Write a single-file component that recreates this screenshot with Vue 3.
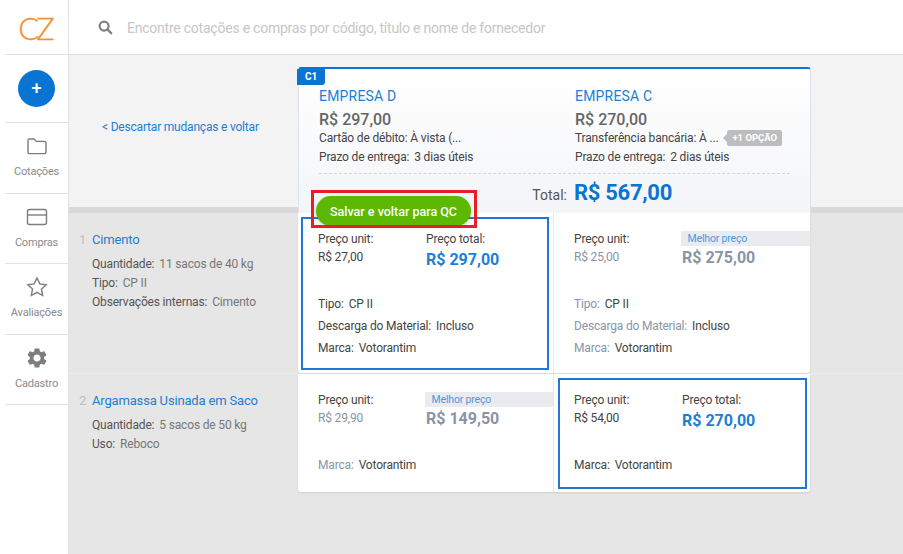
<template>
  <div class="app">
    <aside class="sidebar">
      <div class="logo">CZ</div>
      <div class="add-slot"><button class="add-btn">+</button></div>
      <a v-for="item in navItems" :key="item.label" class="nav-item">
        <svg class="nav-icon" viewBox="0 0 24 24" v-html="item.icon"></svg>
        <span>{{ item.label }}</span>
      </a>
    </aside>

    <div class="main">
      <header class="topbar">
        <svg class="search-icon" viewBox="0 0 16 16">
          <circle cx="6.500" cy="6.500" r="4.800" />
          <path d="M10 10l4.800 4.800" />
        </svg>
        <span class="search-text">Encontre cotações e compras por código, título e nome de fornecedor</span>
      </header>

      <section class="summary">
        <div class="back-col"><a class="back-link">&lt; Descartar mudanças e voltar</a></div>
        <div class="summary-card">
          <span class="tag">C1</span>
          <div class="vendors">
            <div v-for="vendor in vendors" :key="vendor.name" class="vendor">
              <div class="vendor-name">{{ vendor.name }}</div>
              <div class="vendor-price">{{ vendor.price }}</div>
              <div class="vendor-line">
                <span>{{ vendor.payment }}</span>
                <span v-if="vendor.extra" class="extra">{{ vendor.extra }}</span>
              </div>
              <div class="vendor-line">
                <span class="key">Prazo de entrega:</span><span>{{ vendor.delivery }}</span>
              </div>
            </div>
          </div>
          <div class="total-row">
            <span class="total-label">Total:</span>
            <span class="total-value">R$ 567,00</span>
          </div>
          <button class="save-btn">Salvar e voltar para QC</button>
          <div class="highlight"></div>
        </div>
      </section>

      <section v-for="(row, i) in rows" :key="row.name" class="row" :class="'row-' + (i + 1)">
        <div class="product">
          <div class="product-title">
            <span class="product-num">{{ i + 1 }}</span>
            <a class="product-name">{{ row.name }}</a>
          </div>
          <div class="product-attrs">
            <div v-for="attr in row.attrs" :key="attr[0]">
              <span class="attr-key">{{ attr[0] }}:</span><span class="attr-val">{{ attr[1] }}</span>
            </div>
          </div>
        </div>
        <div class="cells">
          <div v-for="cell in row.cells" :key="cell.total" class="cell" :class="{ selected: cell.selected }">
            <div class="prices">
              <div>
                <div class="price-label">Preço unit:</div>
                <div class="unit-price">{{ cell.unit }}</div>
              </div>
              <div>
                <div v-if="cell.selected" class="price-label">Preço total:</div>
                <div v-else class="best">Melhor preço</div>
                <div class="total-price">{{ cell.total }}</div>
              </div>
            </div>
            <div class="specs">
              <div v-for="spec in cell.specs" :key="spec[0]" class="spec">
                <span class="spec-key">{{ spec[0] }}:</span><span>{{ spec[1] }}</span>
              </div>
            </div>
          </div>
        </div>
      </section>
    </div>
  </div>
</template>

<script setup>
const navItems = [
  {
    label: 'Cotações',
    icon: '<path d="M3 6.500C3 5.400 3.600 5 4.500 5h4.600l2.200 2.400h8.200c1 0 1.500.6 1.500 1.500v9.200c0 1-.6 1.500-1.500 1.500h-15C3.600 19.600 3 19 3 18.100z" />'
  },
  {
    label: 'Compras',
    icon: '<rect x="2.500" y="4.500" width="19" height="15" rx="2" /><path d="M2.500 10h19" />'
  },
  {
    label: 'Avaliações',
    icon: '<path d="M12 3l2.800 5.900 6.400.8-4.700 4.400 1.200 6.400L12 17.400 6.300 20.500l1.200-6.400L2.800 9.700l6.400-.8z" />'
  },
  {
    label: 'Cadastro',
    icon: '<path fill="#7d7d7d" stroke="none" d="M19.140 12.940c.04-.3.06-.61.06-.94 0-.32-.02-.64-.07-.94l2.030-1.580c.18-.14.23-.41.12-.61l-1.920-3.320c-.12-.22-.37-.29-.59-.22l-2.390.96c-.5-.38-1.030-.7-1.620-.94l-.36-2.540c-.04-.24-.24-.41-.48-.41h-3.840c-.24 0-.43.17-.47.41l-.36 2.540c-.59.24-1.130.57-1.620.94l-2.390-.96c-.22-.08-.47 0-.59.22L2.740 8.870c-.12.21-.08.47.12.61l2.030 1.580c-.05.3-.09.63-.09.94s.02.64.07.94l-2.030 1.580c-.18.14-.23.41-.12.61l1.920 3.320c.12.22.37.29.59.22l2.390-.96c.5.38 1.030.7 1.620.94l.36 2.540c.05.24.24.41.48.41h3.840c.24 0 .44-.17.47-.41l.36-2.540c.59-.24 1.130-.56 1.620-.94l2.390.96c.22.08.47 0 .59-.22l1.920-3.320c.12-.22.07-.47-.12-.61l-2.010-1.580zM12 15.600c-1.980 0-3.600-1.620-3.600-3.600s1.620-3.600 3.600-3.600 3.600 1.620 3.600 3.600-1.620 3.600-3.600 3.600z" />'
  }
]

const vendors = [
  {
    name: 'EMPRESA D',
    price: 'R$ 297,00',
    payment: 'Cartão de débito: À vista (...',
    delivery: '3 dias úteis'
  },
  {
    name: 'EMPRESA C',
    price: 'R$ 270,00',
    payment: 'Transferência bancária: À ...',
    extra: '+1 OPÇÃO',
    delivery: '2 dias úteis'
  }
]

const rows = [
  {
    name: 'Cimento',
    attrs: [
      ['Quantidade', '11 sacos de 40 kg'],
      ['Tipo', 'CP II'],
      ['Observações internas', 'Cimento']
    ],
    cells: [
      {
        selected: true,
        unit: 'R$ 27,00',
        total: 'R$ 297,00',
        specs: [['Tipo', 'CP II'], ['Descarga do Material', 'Incluso'], ['Marca', 'Votorantim']]
      },
      {
        unit: 'R$ 25,00',
        total: 'R$ 275,00',
        specs: [['Tipo', 'CP II'], ['Descarga do Material', 'Incluso'], ['Marca', 'Votorantim']]
      }
    ]
  },
  {
    name: 'Argamassa Usinada em Saco',
    attrs: [
      ['Quantidade', '5 sacos de 50 kg'],
      ['Uso', 'Reboco']
    ],
    cells: [
      {
        unit: 'R$ 29,90',
        total: 'R$ 149,50',
        specs: [['Marca', 'Votorantim']]
      },
      {
        selected: true,
        unit: 'R$ 54,00',
        total: 'R$ 270,00',
        specs: [['Marca', 'Votorantim']]
      }
    ]
  }
]
</script>

<style>
html,
body {
  margin: 0;
  height: 100%;
  overflow: hidden;
}
</style>

<style scoped>
.app {
  display: flex;
  width: 903px;
  height: 554px;
  font-family: Roboto, "Liberation Sans", sans-serif;
  font-size: 12px;
  letter-spacing: -0.17px;
  color: #555;
  background: #fff;
  overflow: hidden;
}

/* sidebar */
.sidebar {
  width: 69px;
  flex: none;
  box-sizing: border-box;
  border-right: 1px solid #e2e2e2;
  padding-left: 5px;
}
.logo {
  height: 55px;
  line-height: 56px;
  padding-right: 3px;
  box-sizing: border-box;
  border-bottom: 1px solid #e2e2e2;
  text-align: center;
  font-family: Lato, sans-serif;
  font-weight: 300;
  font-size: 31px;
  letter-spacing: -3px;
  color: #f7902f;
  -webkit-text-stroke: 0.3px #f7902f;
}
.add-slot {
  height: 68px;
  box-sizing: border-box;
  display: flex;
  align-items: center;
  justify-content: center;
  border-bottom: 1px solid #e2e2e2;
}
.add-btn {
  width: 37px;
  height: 37px;
  border: 0;
  padding: 0 0 1px;
  border-radius: 50%;
  background: #0a74d2;
  color: #fff;
  font-family: inherit;
  font-size: 18px;
  font-weight: 500;
  line-height: 1;
}
.nav-item {
  height: 70.5px;
  box-sizing: border-box;
  border-bottom: 1px solid #e2e2e2;
  display: flex;
  flex-direction: column;
  align-items: center;
  padding-top: 11px;
  gap: 7px;
  font-size: 11px;
  color: #8a8a8a;
}
.nav-icon {
  width: 24px;
  height: 24px;
  fill: none;
  stroke: #7d7d7d;
  stroke-width: 1.4;
}

/* top bar */
.main {
  flex: 1;
  min-width: 0;
  background: #e6e6e6;
}
.topbar {
  height: 55px;
  box-sizing: border-box;
  background: #fff;
  border-bottom: 1px solid #dedede;
  display: flex;
  align-items: center;
  padding: 1px 0 0 29px;
  gap: 14px;
}
.search-icon {
  width: 15px;
  height: 15px;
  fill: none;
  stroke: #808080;
  stroke-width: 2.3;
}
.search-text {
  font-size: 14px;
  letter-spacing: -0.23px;
  color: #c6c6c6;
}

/* summary header */
.summary {
  height: 152px;
  box-sizing: content-box;
  display: flex;
  background: #f3f3f3;
  border-bottom: 6px solid #d9d9d9;
}
.back-col {
  width: 229px;
  flex: none;
  padding: 65px 0 0 33px;
  box-sizing: border-box;
}
.back-link {
  color: #1a7fd6;
  font-size: 12px;
  letter-spacing: -0.2px;
}
.summary-card {
  position: relative;
  z-index: 1;
  width: 513px;
  height: 146px;
  margin-top: 12px;
  box-sizing: border-box;
  border-top: 2px solid #0a74d2;
  border-radius: 3px 3px 0 0;
  border-right: 1px solid #dde1ea;
  border-left: 1px solid #dde1ea;
  background: linear-gradient(#fff, #f4f5f8);
}
.tag {
  position: absolute;
  left: -2px;
  top: 0;
  width: 28px;
  height: 16px;
  border-radius: 0 0 3px 0;
  background: #0a74d2;
  color: #fff;
  font-size: 10px;
  font-weight: 700;
  line-height: 15px;
  text-align: center;
}
.vendors {
  display: grid;
  grid-template-columns: 256px 1fr;
  margin: 0 20px;
  padding-top: 19px;
  height: 105px;
  box-sizing: border-box;
  border-bottom: 1px dashed #d5d5d5;
}
.vendor-name {
  font-size: 14px;
  line-height: 16px;
  letter-spacing: 0.2px;
  color: #1a7fd6;
}
.vendor-price {
  margin: 6px 0 -1.5px;
  font-size: 16px;
  font-weight: 500;
  line-height: 20px;
  letter-spacing: 0;
  color: #666;
}
.vendor-line {
  display: flex;
  align-items: center;
  height: 19px;
  white-space: nowrap;
  color: #444;
}
.key {
  margin-right: 5px;
}
.extra {
  position: relative;
  margin-left: 9px;
  height: 16px;
  padding: 0 5px;
  border-radius: 2px;
  background: #bdbdbd;
  color: #fff;
  font-size: 9.5px;
  font-weight: 700;
  line-height: 15px;
  letter-spacing: 0;
}
.extra::before {
  content: "";
  position: absolute;
  left: -4px;
  top: 4px;
  border-style: solid;
  border-width: 4px 4px 4px 0;
  border-color: transparent #bdbdbd transparent transparent;
}
.total-row {
  display: flex;
  align-items: baseline;
  justify-content: flex-end;
  gap: 7px;
  padding-right: 138px;
  margin-top: 6px;
}
.total-label {
  font-size: 14px;
  letter-spacing: 0;
  color: #555;
}
.total-value {
  font-size: 22px;
  font-weight: 700;
  letter-spacing: -0.3px;
  color: #0a74d2;
}
.save-btn {
  position: absolute;
  left: 17px;
  top: 127px;
  width: 155px;
  height: 30px;
  border: 0;
  border-radius: 15px;
  background: #5cb800;
  box-shadow: 0 1px 3px rgba(0, 0, 0, 0.25);
  color: #fff;
  font-family: inherit;
  font-size: 12.5px;
  font-weight: 500;
  z-index: 2;
}
.highlight {
  position: absolute;
  left: 12px;
  top: 121px;
  width: 166px;
  height: 38px;
  box-sizing: border-box;
  border: 3px solid #ed1c24;
  z-index: 3;
}

/* comparison rows */
.row {
  display: flex;
  border-bottom: 1px solid #ececec;
  box-sizing: border-box;
}
.row-1 {
  height: 161px;
}
.row-2 {
  height: 118px;
  border-bottom: 0;
}
.product {
  width: 229px;
  flex: none;
  padding: 19px 0 0 10px;
  box-sizing: border-box;
}
.product-title {
  display: flex;
  gap: 8px;
  font-size: 13px;
  line-height: 16px;
}
.product-num {
  width: 5px;
  color: #bdbdbd;
}
.product-name {
  color: #1a7fd6;
}
.product-attrs {
  margin: 7px 0 0 13px;
  line-height: 19px;
}
.attr-key {
  color: #555;
  margin-right: 5px;
}
.attr-val {
  color: #777;
}
.cells {
  width: 512px;
  display: grid;
  grid-template-columns: 256px 256px;
  background: #fff;
  border-radius: 0 0 3px 3px;
  box-shadow: 0 1px 2px rgba(0, 0, 0, 0.1);
}
.cell {
  position: relative;
  padding: 17px 0 0 20px;
  box-sizing: border-box;
  border-right: 1px solid #e8e8e8;
  color: #8a94a6;
}
.cell:last-child {
  border-right: 0;
}
.cell.selected {
  color: #444;
}
.cell.selected::after {
  content: "";
  position: absolute;
  inset: 4px 4px 3px 3px;
  border: 2px solid #1f78d1;
}
.cell.selected:last-child::after {
  inset: 4px 3px 3px 4px;
}
.prices {
  display: grid;
  grid-template-columns: 108px 1fr;
  height: 63px;
}
.price-label {
  line-height: 18px;
  color: #444;
}
.unit-price {
  line-height: 18px;
}
.total-price {
  margin-top: 2px;
  font-size: 16px;
  font-weight: 700;
  line-height: 20px;
  letter-spacing: 0;
  color: #8a94a6;
}
.selected .total-price {
  color: #1a7fd6;
}
.best {
  height: 15px;
  margin: 1px 0 2px -1px;
  padding-left: 6.5px;
  background: #e9ebee;
  color: #4a9ae0;
  font-size: 10.5px;
  line-height: 15px;
}
.specs {
  line-height: 22px;
}
.spec-key {
  margin-right: 5px;
}
.spec span:last-child {
  color: #444;
}
</style>
